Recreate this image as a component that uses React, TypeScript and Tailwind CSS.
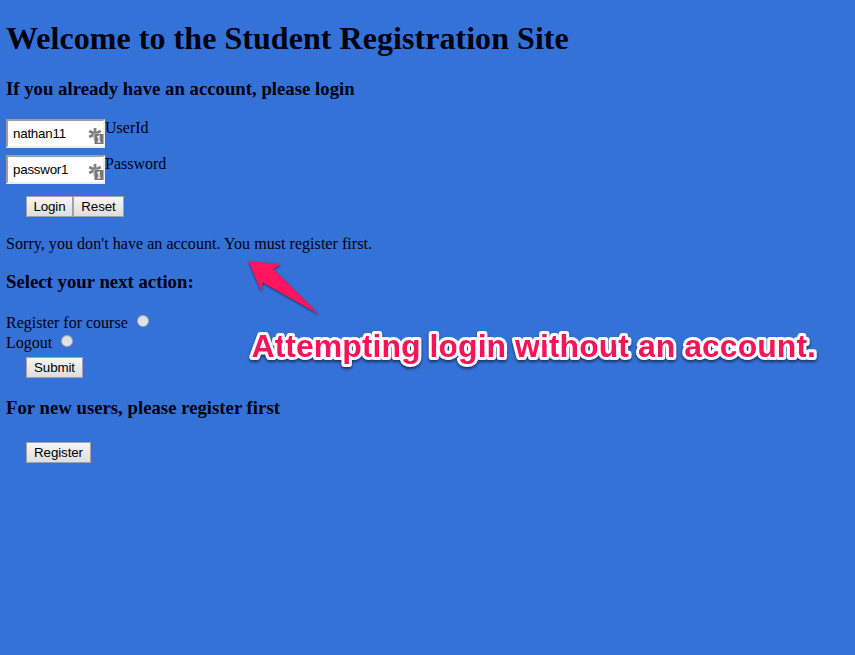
import type { ReactNode } from "react";

function Heading({ children, className = "" }: { children: ReactNode; className?: string }) {
  return <h3 className={`h-[22px] whitespace-nowrap text-[18.72px] font-bold leading-[22px] tracking-[0.02px] ${className}`}>{children}</h3>;
}

function FormButton({ children, className = "" }: { children: ReactNode; className?: string }) {
  return (
    <button
      type="button"
      className={`h-[21px] shrink-0 whitespace-nowrap border border-[#a0a2a8] bg-linear-to-b from-[#f6f6f6] to-[#dedede] text-center font-['Liberation_Sans',Arial,sans-serif] text-[13.33px] leading-[18px] tracking-[-0.1px] text-black ${className}`}
    >
      {children}
    </button>
  );
}

function KeyIcon() {
  return (
    <svg className="-mr-px mt-[3px] h-[17px] w-[16px] shrink-0" viewBox="0 0 16 17">
      <path d="M7 1v12M1.2 4l11.6 6M1.2 10L12.8 4" stroke="#808080" strokeWidth="2.8" fill="none" />
      <rect x="5.5" y="6.5" width="10" height="10.5" fill="#fff" fillOpacity="0.6" />
      <rect x="6.5" y="7" width="9" height="10" fill="#777" />
      <path d="M9.3 10.2l1.7-1v6" stroke="#fff" strokeWidth="1.4" fill="none" />
      <path d="M9 15h4" stroke="#fff" strokeWidth="0.8" fill="none" />
    </svg>
  );
}

function Field({ value, label }: { value: string; label: string }) {
  return (
    <label className="flex h-[29px] items-start">
      <span className="flex h-[29px] w-[99px] items-center justify-between border-2 border-t-[#9c9ea3] border-l-[#9c9ea3] border-r-[#eeeeee] border-b-[#eeeeee] bg-white pl-[5px] font-['Liberation_Sans',Arial,sans-serif] text-[13.33px] leading-[18px] tracking-[-0.22px] text-black">
        {value}
        <KeyIcon />
      </span>
      <span className="text-[16px] leading-[18px]">{label}</span>
    </label>
  );
}

function Choice({ label }: { label: string }) {
  return (
    <label className="flex h-5 items-start text-[16px] leading-[18px]">
      <span>{label}</span>
      <span className="ml-[9px] mt-px h-3 w-3 rounded-full border border-[#aaa9ad] bg-linear-to-b from-[#dcdcdc] to-[#e8e8e8]" />
    </label>
  );
}

export default function App() {
  return (
    <main className="relative h-[655px] w-[855px] overflow-hidden bg-[#3572d8] pl-1.5 pt-5 font-['Liberation_Serif','Times_New_Roman',serif] text-[#000010]">
      <h1 className="h-9 whitespace-nowrap text-[32px] font-bold leading-9 tracking-[0.05px]">Welcome to the Student Registration Site</h1>
      <Heading className="mt-[22px]">If you already have an account, please login</Heading>
      <form className="mt-[19px] flex flex-col">
        <Field value="nathan11" label="UserId" />
        <div className="mt-[7px]">
          <Field value="passwor1" label="Password" />
        </div>
        <div className="ml-5 mt-3 flex">
          <FormButton className="w-[47px]">Login</FormButton>
          <FormButton className="w-[51px]">Reset</FormButton>
        </div>
      </form>
      <p className="mt-[18px] h-[18px] text-[16px] leading-[18px] tracking-[0.05px]">Sorry, you don't have an account. You must register first.</p>
      <Heading className="mt-[18px]">Select your next action:</Heading>
      <div className="mt-[21px]">
        <Choice label="Register for course" />
        <Choice label="Logout" />
      </div>
      <div className="ml-5 mt-[3px] flex">
        <FormButton className="w-[57px]">Submit</FormButton>
      </div>
      <Heading className="mt-[19px]">For new users, please register first</Heading>
      <div className="ml-5 mt-[23px] flex">
        <FormButton className="w-[65px]">Register</FormButton>
      </div>
      <svg className="absolute left-[240px] top-[252px] h-[125px] w-[600px]" viewBox="240 252 600 125">
        <path
          className="drop-shadow-[0px_1.5px_1px_rgba(0,0,0,0.55)]"
          d="M249 261.5L280 264.5L273 269L317.5 313L262.5 282L261 290Z"
          fill="#ff145d"
          stroke="#ff145d"
          strokeWidth="0.8"
          strokeLinejoin="round"
        />
        <text
          x="251.5"
          y="357"
          textLength="564.5"
          className="font-['Liberation_Sans',Arial,sans-serif] text-[32px] font-bold [paint-order:stroke] drop-shadow-[0px_2px_1.5px_rgba(0,0,0,0.55)]"
          fill="#f5145a"
          stroke="#fff"
          strokeWidth="6"
          strokeLinejoin="round"
        >
          Attempting login without an account.
        </text>
      </svg>
    </main>
  );
}
